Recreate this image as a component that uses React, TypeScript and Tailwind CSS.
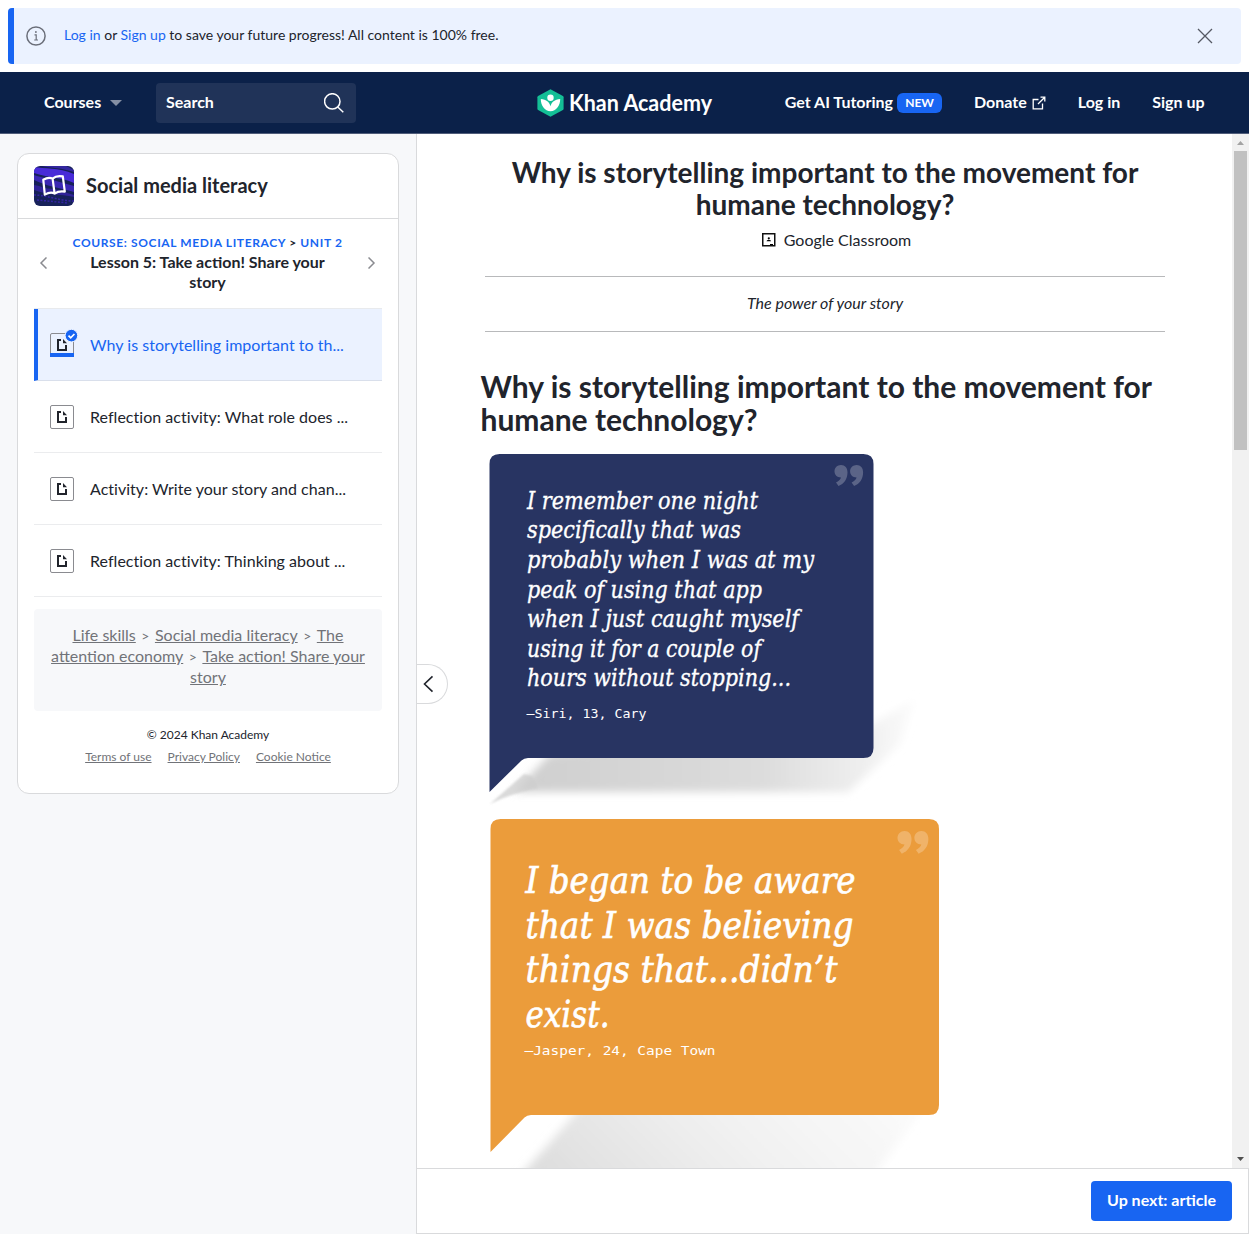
import React from 'react';

const lessons = [
  'Why is storytelling important to th...',
  'Reflection activity: What role does ...',
  'Activity: Write your story and chan...',
  'Reflection activity: Thinking about ...',
];

function ArticleIcon({ active }: { active?: boolean }) {
  return (
    <svg className="h-[28px] w-[28px] shrink-0 overflow-visible" viewBox="0 0 28 28">
      <rect x="0.5" y="2.5" width="23" height="23" rx="1.5" fill={active ? 'none' : '#fff'} stroke="#8a8b90" />
      {active && <rect x="0" y="22" width="24" height="4" fill="#1865f2" />}
      <path d="M11 9H8v10h8v-5" fill="none" stroke="#21242c" strokeWidth="2" />
      <path d="M13 8l4 4.300H13z" fill="#21242c" />
      {active && (
        <g>
          <circle cx="21.400" cy="4.600" r="6.300" fill="#1865f2" stroke="#ebf2ff" strokeWidth="1" />
          <path d="M18.500 4.700l2.200 2.200 3.700-3.900" fill="none" stroke="#fff" strokeWidth="1.700" />
        </g>
      )}
    </svg>
  );
}

function Banner() {
  return (
    <div className="m-2 flex h-14 items-center overflow-hidden rounded-[4px] border-l-[6px] border-[#1865f2] bg-[#ebf2ff]">
      <svg className="ml-3 h-5 w-5" viewBox="0 0 20 20" fill="none" stroke="#6b6f7a" strokeWidth="1.5">
        <circle cx="10" cy="10" r="9.1" />
        <path d="M8.500 8.800h1.700v5M8.200 14h3.800" strokeWidth="1.200" />
        <circle cx="9.900" cy="6" r="0.900" fill="#6b6f7a" stroke="none" />
      </svg>
      <p className="mb-[2px] ml-[18px] text-[14px] leading-5">
        <span className="text-[#1865f2]">Log in</span> or <span className="text-[#1865f2]">Sign up</span> to save your
        future progress! All content is 100% free.
      </p>
      <svg className="mr-7 ml-auto h-4 w-4" viewBox="0 0 16 16" stroke="#555963" strokeWidth="1.300">
        <path d="M1 1l14 14M15 1L1 15" />
      </svg>
    </div>
  );
}

function Header() {
  return (
    <header className="flex h-[62px] items-center border-b border-[#505d7a] bg-[#0b2149] text-[16px] font-bold text-white">
      <div className="ml-11 flex w-28 items-center">
        <span className="mb-[2px] w-[66px]">Courses</span>
        <svg className="h-[6px] w-3" viewBox="0 0 12 6"><path d="M0 0h12L6 6z" fill="#858fa4" /></svg>
      </div>
      <div className="flex h-10 w-[200px] items-center justify-between rounded-[4px] bg-[#203358] pr-3 pl-[10px]">
        <span className="mb-[2px]">Search</span>
        <svg className="h-5 w-5" viewBox="0 0 20 20" fill="none" stroke="#fff" strokeWidth="1.500">
          <circle cx="8.300" cy="8.400" r="7.700" /><path d="M14 14.200l5.300 5" />
        </svg>
      </div>
      <svg className="ml-[181px] h-[36px] w-[180px]" viewBox="0 0 180 36">
        <path d="M13.500 4.200l12.400 6.800q.7.500.7 1.300v11.400q0 .8-.7 1.300l-12.400 6.800-12.400-6.800q-.7-.5-.7-1.300V12.300q0-.8.7-1.300z" fill="#14bf96" />
        <circle cx="13.500" cy="12.700" r="3.200" fill="#fff" />
        <path d="M3.800 14c5.500.3 8.800 3.400 9.700 7.300.9-3.900 4.200-7 9.700-7.300 0 6.700-4 12-9.700 12.300-5.700-.3-9.700-5.600-9.700-12.300z" fill="#fff" />
        <text x="32" y="25.500" fontFamily="Lato" fontWeight="700" fontSize="22" fill="#fff" textLength="143" lengthAdjust="spacingAndGlyphs">Khan Academy</text>
      </svg>
      <div className="mr-[44.500px] ml-auto flex items-center">
        <span className="mb-[2px]">Get AI Tutoring</span>
        <span className="mr-8 ml-1 flex h-5 w-[45px] items-center justify-center rounded-[6px] bg-[#1865f2] text-[12px]">NEW</span>
        <span className="mb-[2px]">Donate</span>
        <svg className="mr-8 ml-[5px] h-[14px] w-[14px]" viewBox="0 0 14 14" fill="none" stroke="#fff" strokeWidth="1.300">
          <path d="M6.500 3.500H1.200v9.300h9.300V7.500M8.500 1.200h4.300v4.300M12.800 1.200L6 8" />
        </svg>
        <span className="mr-8 mb-[2px]">Log in</span>
        <span className="mb-[2px]">Sign up</span>
      </div>
    </header>
  );
}

function CourseIcon() {
  return (
    <svg className="h-10 w-10" viewBox="0 0 40 40">
      <defs><clipPath id="tile"><rect width="40" height="40" rx="6" /></clipPath></defs>
      <g clipPath="url(#tile)">
        <rect width="40" height="40" fill="#17215a" />
        <path d="M0 1C10 3 24 1 40 8v9C27 11 14 12 0 7z" fill="#482bd8" />
        <path d="M0 9c8 3 16 3 22 6l18 5v6C26 22 12 20 0 14z" fill="#3a27b3" />
        <path d="M0 19c8 1 10 4 20 4l20 6v2c-14-3-28-2-40-7z" fill="#302398" />
        <path d="M8 0h24l8 4v2C28 2 18 2 8 0z" fill="#33279f" />
        <path d="M0 29c12 0 26 6 40 6M3 34l31 3" stroke="#3424a4" strokeWidth="1.500" strokeDasharray="2 1.500" fill="none" />
      </g>
      <path d="M9.300 13.800q5-3.200 9.300-1.200 4-3.500 10.200-2.200l2 15.200q-6-1-10.200 2-4-2.200-9.800 1zM18.600 12.600l2 15" fill="none" stroke="#fff" strokeWidth="2.200" strokeLinejoin="round" />
    </svg>
  );
}

function Sidebar() {
  return (
    <aside className="w-[417px] shrink-0 border-r border-[#d9dadc] bg-[#f7f8fa] pt-[19px] pl-[17px]">
      <div className="h-[641px] w-[382px] rounded-[12px] border border-[#d9dadc] bg-white">
        <div className="flex h-[65px] items-center gap-3 border-b border-[#d9dadc] px-4">
          <CourseIcon />
          <h2 className="pb-[2px] text-[20px] leading-6 font-bold">Social media literacy</h2>
        </div>
        <div className="flex h-[89px] items-center justify-between pr-[22px] pl-[21px] text-center">
          <svg className="mb-[2px] h-3 w-2" viewBox="0 0 8 12" fill="none" stroke="#8a8b90" strokeWidth="1.500"><path d="M7.500 .5L2 6 7.500 11.500" /></svg>
          <div className="mb-[2px] w-[276px]">
            <p className="text-[12px] leading-[19px] font-bold tracking-[0.620px] text-[#1865f2]">
              COURSE: SOCIAL MEDIA LITERACY <span className="text-[#21242c]">&gt;</span> UNIT 2
            </p>
            <p className="px-4 text-[16px] leading-5 font-bold">Lesson 5: Take action! Share your story</p>
          </div>
          <svg className="mb-[2px] h-3 w-2" viewBox="0 0 8 12" fill="none" stroke="#8a8b90" strokeWidth="1.500"><path d="M.5 .5L6 6 .5 11.500" /></svg>
        </div>
        <div className="mx-4 border-t border-[#e8eaed]">
          {lessons.map((title, i) => (
            <div
              key={title}
              className={
                i === 0
                  ? 'flex h-[72px] items-center gap-3 border-b border-l-4 border-b-[#d9dfeb] border-l-[#1865f2] bg-[#ebf2ff] pl-3 text-[#1865f2]'
                  : 'flex h-[72px] items-center gap-3 border-b border-[#ebecee] pl-4'
              }
            >
              <ArticleIcon active={i === 0} />
              <span className="text-[16px] tracking-[0.030px]">{title}</span>
            </div>
          ))}
        </div>
        <div className="mx-4 mt-3 h-[102px] rounded-[4px] bg-[#f7f8fa] px-4 pt-[15px] text-center text-[16px] leading-[21px] text-[#717378]">
          <span className="underline">Life skills</span><span className="px-[5.500px] text-[14px] leading-none">&gt;</span>
          <span className="underline">Social media literacy</span><span className="px-[5.500px] text-[14px] leading-none">&gt;</span>
          <span className="underline">The<br />attention economy</span><span className="px-[5.500px] text-[14px] leading-none">&gt;</span>
          <span className="underline">Take action! Share your<br />story</span>
        </div>
        <p className="mt-4 text-center text-[12px] leading-4">© 2024 Khan Academy</p>
        <div className="mt-[6px] flex justify-center gap-4 text-[12px] leading-4 text-[#717378] underline">
          <span>Terms of use</span><span>Privacy Policy</span><span>Cookie Notice</span>
        </div>
      </div>
    </aside>
  );
}

function QuoteMark({ transform }: { transform: string }) {
  return (
    <g transform={transform} fill="#fff" fillOpacity="0.240">
      <path d="M6.500 0C10.500 0 13 2.800 13 7.500 13 14 9.500 19 4 21L1.500 17.500C4 16.200 6 14.500 6.500 12.500 2.500 12.500 0 9.800 0 6.300 0 2.800 2.800 0 6.500 0z" />
      <path d="M22.100 0C26.100 0 28.600 2.800 28.600 7.500 28.600 14 25.100 19 19.600 21L17.100 17.500C19.600 16.200 21.600 14.500 22.100 12.500 18.100 12.500 15.600 9.800 15.600 6.300 15.600 2.800 18.400 0 22.100 0z" />
    </g>
  );
}

type Line = [string, number];

const siriLines: Line[] = [
  ['I remember one night', 231],
  ['specifically that was', 214],
  ['probably when I was at my', 287],
  ['peak of using that app', 235],
  ['when I just caught myself', 272],
  ['using it for a couple of', 234],
  ['hours without stopping...', 264],
];

const jasperLines: Line[] = [
  ['I began to be aware', 330],
  ['that I was believing', 328],
  ['things that...didn’t', 312],
  ['exist.', 84],
];

function SiriQuote() {
  return (
    <svg className="block h-[365px] w-[460px]" viewBox="0 0 460 365">
      <defs>
        <linearGradient id="s1" gradientUnits="userSpaceOnUse" x1="40" y1="0" x2="440" y2="0">
          <stop offset="0" stopColor="#cfcfcf" /><stop offset="0.600" stopColor="#dcdcdc" /><stop offset="0.850" stopColor="#eeeeee" /><stop offset="1" stopColor="#fdfdfd" />
        </linearGradient>
        <filter id="b1" x="-10%" y="-30%" width="120%" height="160%"><feGaussianBlur stdDeviation="4.500" /></filter>
        <filter id="b1tip" x="-20%" y="-30%" width="140%" height="160%"><feGaussianBlur stdDeviation="1.200" /></filter>
      </defs>
      <path d="M34 338L70 300 385 275 435 245 420 290 368 338z" fill="url(#s1)" filter="url(#b1)" />
      <path d="M10 350L44 320 52 322 58 334Q30 340 10 350z" fill="#cecece" opacity=".75" filter="url(#b1tip)" />
      <path d="M9.500 338V10q0-10 10-10h364q10 0 10 10v284q0 10-10 10H48q-4 0-6.500 2.500z" fill="#283462" />
      <QuoteMark transform="translate(354.500 11)" />
      {siriLines.map(([t, w], i) => (
        <text key={t} x="47" y={54.700 + i * 29.600} fontFamily="DejaVu Serif, serif" fontStyle="italic" fontSize="24" fill="#fff" stroke="#fff" strokeWidth="0.350" textLength={w} lengthAdjust="spacingAndGlyphs">{t}</text>
      ))}
      <text x="46.500" y="264" fontFamily="DejaVu Sans Mono, monospace" fontSize="12.500" fill="#fff" textLength="120" lengthAdjust="spacingAndGlyphs">—Siri, 13, Cary</text>
    </svg>
  );
}

function JasperQuote() {
  return (
    <svg className="block h-[380px] w-[480px]" viewBox="0 0 480 380">
      <defs>
        <linearGradient id="s2" gradientUnits="userSpaceOnUse" x1="100" y1="390" x2="310" y2="180">
          <stop offset="0" stopColor="#dedede" /><stop offset="0.550" stopColor="#f1f1f1" /><stop offset="1" stopColor="#fafafa" />
        </linearGradient>
        <filter id="b2" x="-10%" y="-30%" width="120%" height="160%"><feGaussianBlur stdDeviation="5" /></filter>
      </defs>
      <path d="M20 380L108 280H450L395 355 355 380z" fill="url(#s2)" filter="url(#b2)" />
      <path d="M10.500 333V10q0-10 10-10H449q10 0 10 10v276q0 10-10 10H51q-4 0-6.500 2.500z" fill="#eb9c3b" />
      <QuoteMark transform="translate(417.500 12) scale(1.080)" />
      {jasperLines.map(([t, w], i) => (
        <text key={t} x="45.500" y={74 + i * 44.700} fontFamily="DejaVu Serif, serif" fontStyle="italic" fontSize="37" fill="#fff" stroke="#fff" strokeWidth="0.700" textLength={w} lengthAdjust="spacingAndGlyphs">{t}</text>
      ))}
      <text x="44.500" y="236" fontFamily="DejaVu Sans Mono, monospace" fontSize="13" fill="#fff" textLength="191" lengthAdjust="spacingAndGlyphs">—Jasper, 24, Cape Town</text>
    </svg>
  );
}

function Article() {
  return (
    <main className="h-full flex-1 overflow-hidden pt-[22px]">
      <div className="ml-[68px] w-[680px] text-center">
        <h1 className="text-[28px] leading-8 font-bold">
          Why is storytelling important to the movement for<br />humane technology?
        </h1>
        <div className="mt-[10px] flex h-5 items-center justify-center gap-2 pl-[23px]">
          <svg className="h-[14px] w-[14px]" viewBox="0 0 14 14">
            <rect x="0.750" y="0.750" width="12" height="12" fill="none" stroke="#111" strokeWidth="1.500" />
            <circle cx="6.800" cy="5.300" r="1.100" /><path d="M4.500 8.300q0-1.500 2.300-1.500t2.300 1.500zM8 11h3v1H8z" />
          </svg>
          <span className="text-[16px]">Google Classroom</span>
        </div>
        <div className="mt-[26px] flex h-14 items-center justify-center border-y border-[#b8b9bb] pb-[2px] text-[16px] italic">The power of your story</div>
      </div>
      <h2 className="mt-[38px] ml-[63.500px] text-[30px] leading-[33px] font-bold">
        Why is storytelling important to the movement for<br />humane technology?
      </h2>
      <div className="mt-[18px] ml-[63px]">
        <SiriQuote />
        <JasperQuote />
      </div>
    </main>
  );
}

export default function App() {
  return (
    <div className="flex h-[1234px] w-[1249px] flex-col overflow-hidden bg-white font-['Lato',sans-serif] text-[#21242c]">
      <Banner />
      <Header />
      <div className="flex min-h-0 flex-1">
        <Sidebar />
        <section className="relative flex min-w-0 flex-1 flex-col">
          <div className="flex h-[1034px]">
            <Article />
            <div className="flex w-[17px] flex-col items-center bg-[#f1f1f1]">
              <svg className="h-[17px] w-[17px]" viewBox="0 0 17 17"><path d="M5 11h7L8.500 7z" fill="#a3a3a3" /></svg>
              <div className="h-[299px] w-[13px] bg-[#c1c1c1]" />
              <svg className="mt-auto h-[17px] w-[17px]" viewBox="0 0 17 17"><path d="M5 6h7l-3.500 4z" fill="#505050" /></svg>
            </div>
          </div>
          <footer className="flex flex-1 items-center justify-end border-y border-r border-[#d9dadc] pr-4">
            <button className="h-10 w-[141px] rounded-[4px] bg-[#1865f2] pb-[2px] text-[16px] font-bold text-white">Up next: article</button>
          </footer>
          <button className="absolute top-[530px] left-0 flex h-10 w-[31px] items-center rounded-r-full border border-l-0 border-[#d9dadc] bg-white pl-[6px]">
            <svg className="h-[18px] w-[11px]" viewBox="0 0 11 18" fill="none" stroke="#21242c" strokeWidth="1.600"><path d="M9.500 1.300L1.500 9l8 7.700" /></svg>
          </button>
        </section>
      </div>
    </div>
  );
}
